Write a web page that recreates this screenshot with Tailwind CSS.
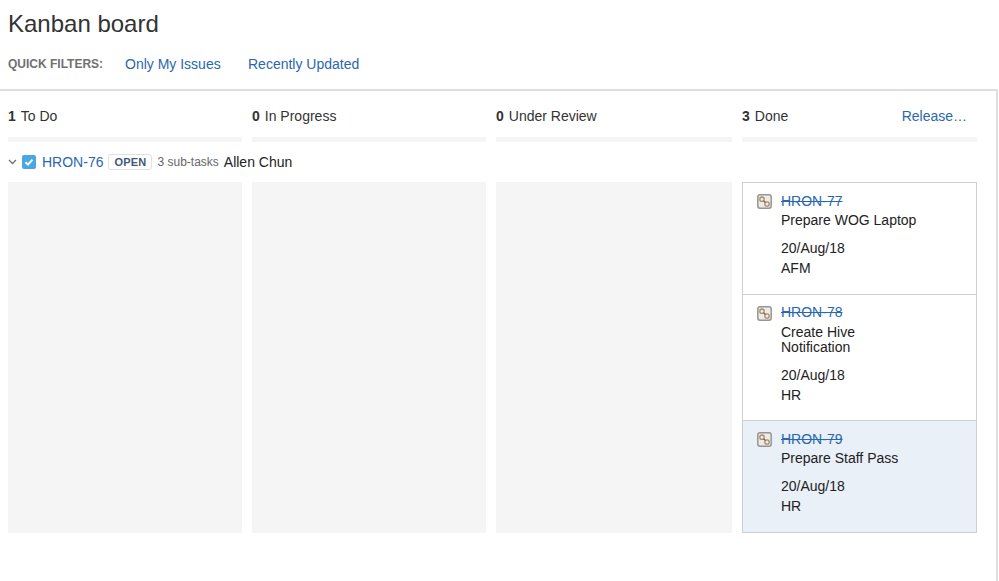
<!doctype html>
<html>
<head>
<meta charset="utf-8">
<script src="https://cdn.jsdelivr.net/npm/@tailwindcss/browser@4"></script>
</head>
<body class="bg-white">
<div class="w-[999px] h-[581px] overflow-hidden font-['Liberation_Sans',Arial,sans-serif] text-[#333] text-[14px] leading-[20px]">
  <h1 class="h-[48px] pl-[8px] pt-[9px] text-[24px] leading-[30px] text-[#333]">Kanban board</h1>
  <div class="h-[41px] pl-[8px] pt-[6px] flex items-start">
    <span class="w-[117px] text-[12px] leading-[20px] font-bold text-[#707070]">QUICK FILTERS:</span>
    <a class="w-[123px] text-[#2a67ad]">Only My Issues</a>
    <a class="text-[#2a67ad]">Recently Updated</a>
  </div>
  <div class="h-[492px] mr-[1px] border-t-2 border-r-2 border-[#dfdfdf] pl-[8px] pr-[20px]">
    <div class="grid grid-cols-[234px_234px_236px_235px] gap-x-[10px] h-[46px]">
      <div class="pt-[15px]"><b class="mr-[5px]">1</b>To Do</div>
      <div class="pt-[15px]"><b class="mr-[5px]">0</b>In Progress</div>
      <div class="pt-[15px]"><b class="mr-[5px]">0</b>Under Review</div>
      <div class="pt-[15px] flex justify-between pr-[10px]"><span><b class="mr-[5px]">3</b>Done</span><a class="text-[#2a67ad]">Release…</a></div>
    </div>
    <div class="grid grid-cols-[234px_234px_236px_235px] gap-x-[10px]">
      <div class="h-[5px] bg-[#f5f5f5]"></div>
      <div class="h-[5px] bg-[#f5f5f5]"></div>
      <div class="h-[5px] bg-[#f5f5f5]"></div>
      <div class="h-[5px] bg-[#f5f5f5]"></div>
    </div>
    <div class="h-[40px] flex items-center">
      <svg class="w-[9px] h-[6px] mr-[4px]" viewBox="0 0 9 6" fill="none" stroke="#707070" stroke-width="1.3"><path d="M1 1l3.5 3.5L8 1"/></svg>
      <svg class="w-[14px] h-[14px] mr-[6px] ml-[1px]" viewBox="0 0 14 14"><rect width="14" height="14" rx="2" fill="#4ba7e3"/><path d="M3.5 7.2l2.5 2.4 4.5-5" fill="none" stroke="#fff" stroke-width="2"/></svg>
      <a class="text-[#2a67ad] mr-[5px]">HRON-76</a>
      <span class="h-[16px] px-[5px] mr-[5px] border border-[#dfe1e6] rounded-[3px] text-[11px] leading-[14px] font-bold text-[#43597a] tracking-[0.2px]">OPEN</span>
      <span class="text-[12px] text-[#666] mr-[5px]">3 sub-tasks</span>
      <span class="text-[#222]">Allen Chun</span>
    </div>
    <div class="grid grid-cols-[234px_234px_236px_235px] gap-x-[10px] h-[351px]">
      <div class="bg-[#f5f5f5]"></div>
      <div class="bg-[#f5f5f5]"></div>
      <div class="bg-[#f5f5f5]"></div>
      <div class="flex flex-col border border-[#cfcfcf] text-[#222]">
        <div class="h-[112px] border-b border-[#cfcfcf] bg-white flex pl-[14px] pt-[9px]">
          <svg class="w-[15px] h-[15px] mr-[9px] mt-[2px]" viewBox="0 0 15 15" fill="none"><rect x=".8" y=".8" width="13.4" height="13.4" rx="2.2" fill="#efebe4" stroke="#959595" stroke-width="1.5"/><circle cx="5" cy="5.2" r="2.2" stroke="#a98f72" stroke-width="1.3"/><circle cx="10" cy="10" r="2.2" stroke="#a98f72" stroke-width="1.3"/><path d="M6.5 6.8l2 1.7" stroke="#6f6355" stroke-width="1.2"/></svg>
          <div>
            <a class="block line-through text-[#2a67ad] leading-[18px]">HRON-77</a>
            <div class="mb-[8px]">Prepare WOG Laptop</div>
            <div>20/Aug/18</div>
            <div>AFM</div>
          </div>
        </div>
        <div class="h-[126px] border-b border-[#cfcfcf] bg-white flex pl-[14px] pt-[8px]">
          <svg class="w-[15px] h-[15px] mr-[9px] mt-[3px]" viewBox="0 0 15 15" fill="none"><rect x=".8" y=".8" width="13.4" height="13.4" rx="2.2" fill="#efebe4" stroke="#959595" stroke-width="1.5"/><circle cx="5" cy="5.2" r="2.2" stroke="#a98f72" stroke-width="1.3"/><circle cx="10" cy="10" r="2.2" stroke="#a98f72" stroke-width="1.3"/><path d="M6.5 6.8l2 1.7" stroke="#6f6355" stroke-width="1.2"/></svg>
          <div>
            <a class="block line-through text-[#2a67ad] leading-[19px]">HRON-78</a>
            <div class="mb-[10px] leading-[15px] pt-[3px]">Create Hive<br>Notification</div>
            <div>20/Aug/18</div>
            <div>HR</div>
          </div>
        </div>
        <div class="flex-1 bg-[#e9f0f8] flex pl-[14px] pt-[9px]">
          <svg class="w-[15px] h-[15px] mr-[9px] mt-[2px]" viewBox="0 0 15 15" fill="none"><rect x=".8" y=".8" width="13.4" height="13.4" rx="2.2" fill="#efebe4" stroke="#959595" stroke-width="1.5"/><circle cx="5" cy="5.2" r="2.2" stroke="#a98f72" stroke-width="1.3"/><circle cx="10" cy="10" r="2.2" stroke="#a98f72" stroke-width="1.3"/><path d="M6.5 6.8l2 1.7" stroke="#6f6355" stroke-width="1.2"/></svg>
          <div>
            <a class="block line-through text-[#2a67ad] leading-[18px]">HRON-79</a>
            <div class="mb-[8px]">Prepare Staff Pass</div>
            <div>20/Aug/18</div>
            <div>HR</div>
          </div>
        </div>
      </div>
    </div>
  </div>
</div>
</body>
</html>
